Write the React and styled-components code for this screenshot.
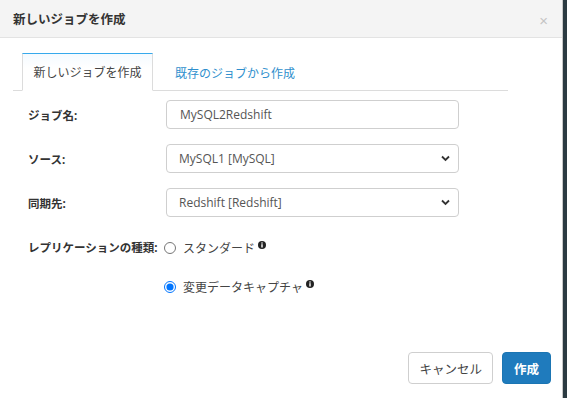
import React from 'react';
import styled, { createGlobalStyle } from 'styled-components';

const GlobalStyle = createGlobalStyle`
  html, body {
    margin: 0;
    padding: 0;
    background: #2c3b42;
  }
  body {
    font-family: "Open Sans", "Noto Sans CJK JP", sans-serif;
    color: #333;
  }
`;

const Modal = styled.div`
  display: flex;
  flex-direction: column;
  width: 563px;
  height: 398px;
  background: #fff;
  border-right: 1px solid #c8c8c8;
  box-sizing: border-box;
`;

const Header = styled.div`
  display: flex;
  align-items: center;
  justify-content: space-between;
  height: 37px;
  padding: 0 14px 0 13px;
  background: #f4f4f4;
  border-bottom: 1px solid #e3e3e3;
`;

const Title = styled.h4`
  margin: 0;
  font-size: 12.5px;
  font-weight: 700;
  color: #333;
`;

const Close = styled.button`
  border: none;
  background: none;
  padding: 0;
  margin-top: 3px;
  font-family: "Liberation Sans", sans-serif;
  font-size: 15px;
  color: #c4c4c4;
`;

const Body = styled.div`
  display: flex;
  flex-direction: column;
  padding: 14px 54px 0 13px;
`;

const Tabs = styled.ul`
  display: flex;
  align-items: flex-end;
  margin: 0;
  padding: 0 0 0 9px;
  list-style: none;
  border-bottom: 1px solid #dcdcdc;
  height: 38px;
`;

const Tab = styled.li`
  box-sizing: border-box;
  height: ${({ active }) => (active ? '38px' : '37px')};
  margin-bottom: -1px;
  padding: ${({ active }) => (active ? '0 0' : '0 0 0 22px')};
  width: ${({ active }) => (active ? '131px' : 'auto')};
  display: flex;
  align-items: center;
  justify-content: center;
  font-size: 12px;
  color: ${({ active }) => (active ? '#444' : '#2f8fcd')};
  background: ${({ active }) => (active ? 'linear-gradient(#f4faff, #fff 40%)' : 'transparent')};
  border: ${({ active }) => (active ? '1px solid #dcdcdc' : 'none')};
  border-top: ${({ active }) => (active ? '1px solid #36a9ec' : 'none')};
  border-bottom: ${({ active }) => (active ? '1px solid #fff' : 'none')};
`;

const Form = styled.div`
  display: flex;
  flex-direction: column;
  padding: 9px 0 0 15px;
`;

const Row = styled.div`
  display: flex;
  align-items: ${({ top }) => (top ? 'flex-start' : 'center')};
  margin-bottom: ${({ gap }) => gap}px;
`;

const Label = styled.label`
  width: 138px;
  flex: none;
  font-size: 11.5px;
  font-weight: 700;
  color: #333;
`;

const Field = styled.div`
  position: relative;
  width: 293px;
`;

const Input = styled.input`
  box-sizing: border-box;
  width: 100%;
  height: 29px;
  padding: 0 13px;
  border: 1px solid #cfcfcf;
  border-radius: 4px;
  font-family: "Open Sans", "Noto Sans CJK JP", sans-serif;
  font-size: 12px;
  color: #555;
  outline: none;
`;

const Select = styled.select`
  box-sizing: border-box;
  width: 100%;
  height: 29px;
  padding: 0 12px;
  border: 1px solid #cfcfcf;
  border-radius: 4px;
  background: #fff;
  appearance: none;
  font-family: "Open Sans", "Noto Sans CJK JP", sans-serif;
  font-size: 12px;
  color: #555;
  outline: none;
`;

const Chevron = styled.svg`
  position: absolute;
  right: 9px;
  top: 11px;
  pointer-events: none;
`;

const Options = styled.div`
  display: flex;
  flex-direction: column;
  gap: 21px;
  margin-left: -2px;
`;

const Option = styled.label`
  display: flex;
  align-items: center;
  font-size: 12px;
  color: #444;
`;

const Radio = styled.input`
  width: 12px;
  height: 12px;
  margin: 0 7px 0 0;
`;

const Info = styled.svg`
  margin: -6px 0 0 3px;
`;

const Footer = styled.div`
  display: flex;
  justify-content: flex-end;
  gap: 9px;
  margin-top: auto;
  padding: 0 11px 14px 0;
`;

const Button = styled.button`
  box-sizing: border-box;
  height: 32px;
  padding: 0 ${({ primary }) => (primary ? '11px' : '10px')};
  border-radius: 4px;
  border: 1px solid ${({ primary }) => (primary ? '#1b75b3' : '#cfcfcf')};
  background: ${({ primary }) => (primary ? '#1f7bbd' : '#fff')};
  color: ${({ primary }) => (primary ? '#fff' : '#444')};
  font-family: "Open Sans", "Noto Sans CJK JP", sans-serif;
  font-size: 12.5px;
  font-weight: ${({ primary }) => (primary ? 700 : 400)};
`;

const ChevronIcon = () => (
  <Chevron width="9" height="7" viewBox="0 0 9 7">
    <path d="M1 1.5 L4.5 5 L8 1.5" fill="none" stroke="#333" strokeWidth="1.8" />
  </Chevron>
);

const InfoIcon = () => (
  <Info width="8" height="8" viewBox="0 0 8 8">
    <circle cx="4" cy="4" r="4" fill="#222" />
    <rect x="3.3" y="3.2" width="1.4" height="3.3" fill="#fff" />
    <rect x="3.3" y="1.4" width="1.4" height="1.2" fill="#fff" />
  </Info>
);

const App = () => {
  return (
    <>
      <GlobalStyle />
      <Modal>
        <Header>
          <Title>新しいジョブを作成</Title>
          <Close>×</Close>
        </Header>
        <Body>
          <Tabs>
            <Tab active>新しいジョブを作成</Tab>
            <Tab>既存のジョブから作成</Tab>
          </Tabs>
          <Form>
            <Row gap={15}>
              <Label>ジョブ名:</Label>
              <Field>
                <Input defaultValue="MySQL2Redshift" />
              </Field>
            </Row>
            <Row gap={15}>
              <Label>ソース:</Label>
              <Field>
                <Select defaultValue="mysql1">
                  <option value="mysql1">MySQL1 [MySQL]</option>
                </Select>
                <ChevronIcon />
              </Field>
            </Row>
            <Row gap={22}>
              <Label>同期先:</Label>
              <Field>
                <Select defaultValue="redshift">
                  <option value="redshift">Redshift [Redshift]</option>
                </Select>
                <ChevronIcon />
              </Field>
            </Row>
            <Row top gap={0}>
              <Label>レプリケーションの種類:</Label>
              <Options>
                <Option>
                  <Radio type="radio" name="type" />
                  スタンダード
                  <InfoIcon />
                </Option>
                <Option>
                  <Radio type="radio" name="type" defaultChecked />
                  変更データキャプチャ
                  <InfoIcon />
                </Option>
              </Options>
            </Row>
          </Form>
        </Body>
        <Footer>
          <Button>キャンセル</Button>
          <Button primary>作成</Button>
        </Footer>
      </Modal>
    </>
  );
};

export default App;
